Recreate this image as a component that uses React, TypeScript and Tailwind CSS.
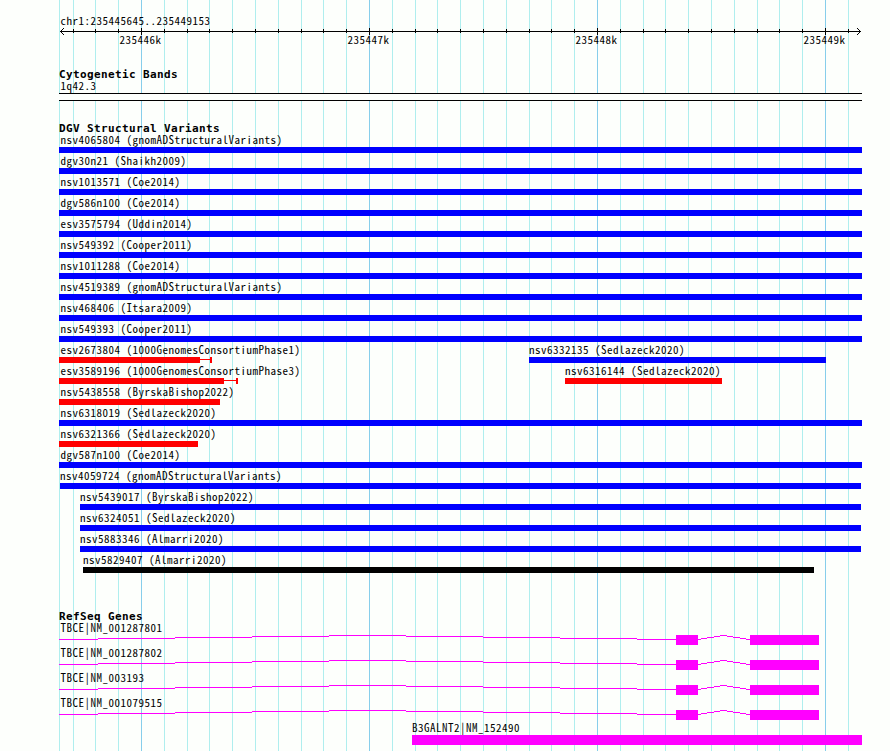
import clsx from 'clsx';

type Bar = {
    label: string;
    start: number;
    end: number;
    color?: string;
    // outer end of the uncertainty whisker
    whisker?: number;
};

// all positions are in px, measured from the left edge of the panel
const LEFT = 59;
const RIGHT = 862;

const red = 'bg-[#ff0000]';
const black = 'bg-black';

const variantRows: Bar[][] = [
    [{ label: 'nsv4065804 (gnomADStructuralVariants)', start: 59, end: 862 }],
    [{ label: 'dgv30n21 (Shaikh2009)', start: 59, end: 862 }],
    [{ label: 'nsv1013571 (Coe2014)', start: 59, end: 862 }],
    [{ label: 'dgv586n100 (Coe2014)', start: 59, end: 862 }],
    [{ label: 'esv3575794 (Uddin2014)', start: 59, end: 862 }],
    [{ label: 'nsv549392 (Cooper2011)', start: 59, end: 862 }],
    [{ label: 'nsv1011288 (Coe2014)', start: 59, end: 862 }],
    [{ label: 'nsv4519389 (gnomADStructuralVariants)', start: 59, end: 862 }],
    [{ label: 'nsv468406 (Itsara2009)', start: 59, end: 862 }],
    [{ label: 'nsv549393 (Cooper2011)', start: 59, end: 862 }],
    [
        { label: 'esv2673804 (1000GenomesConsortiumPhase1)', start: 59, end: 200, color: red, whisker: 212 },
        { label: 'nsv6332135 (Sedlazeck2020)', start: 529, end: 826 },
    ],
    [
        { label: 'esv3589196 (1000GenomesConsortiumPhase3)', start: 59, end: 224, color: red, whisker: 238 },
        { label: 'nsv6316144 (Sedlazeck2020)', start: 565, end: 722, color: red },
    ],
    [{ label: 'nsv5438558 (ByrskaBishop2022)', start: 59, end: 220, color: red }],
    [{ label: 'nsv6318019 (Sedlazeck2020)', start: 59, end: 862 }],
    [{ label: 'nsv6321366 (Sedlazeck2020)', start: 59, end: 198, color: red }],
    [{ label: 'dgv587n100 (Coe2014)', start: 59, end: 862 }],
    [{ label: 'nsv4059724 (gnomADStructuralVariants)', start: 60, end: 861 }],
    [{ label: 'nsv5439017 (ByrskaBishop2022)', start: 80, end: 861 }],
    [{ label: 'nsv6324051 (Sedlazeck2020)', start: 80, end: 861 }],
    [{ label: 'nsv5883346 (Almarri2020)', start: 80, end: 861 }],
    [{ label: 'nsv5829407 (Almarri2020)', start: 83, end: 814, color: black }],
];

const genes = ['TBCE|NM_001287801', 'TBCE|NM_001287802', 'TBCE|NM_003193', 'TBCE|NM_001079515'];

const ticks = Array.from({ length: 35 }, (_, i) => ({
    x: Math.round(141 + 22.8 * (i - 3)),
    major: i % 10 === 3,
}));

function GridLines() {
    return (
        <svg className="absolute inset-0" width="890" height="751" shapeRendering="crispEdges">
            <rect x={LEFT} y="0" width="1" height="751" fill="#afeeee" />
            {ticks.map((t) => (
                <rect key={t.x} x={t.x} y="0" width="1" height="751" fill={t.major ? '#87ceeb' : '#afeeee'} />
            ))}
        </svg>
    );
}

function Ruler() {
    return (
        <svg className="block" width="890" height="7" shapeRendering="crispEdges">
            <rect x="60" y="3" width="801" height="1" />
            {ticks.map((t) => (
                <rect key={t.x} x={t.x} y={t.major ? 0 : 1} width="1" height={t.major ? 7 : 4} />
            ))}
            <path d="M61 2h1v1h-1z M62 1h1v1h-1z M63 0h1v1h-1z M61 4h1v1h-1z M62 5h1v1h-1z M63 6h1v1h-1z" />
            <path d="M859 2h1v1h-1z M858 1h1v1h-1z M857 0h1v1h-1z M859 4h1v1h-1z M858 5h1v1h-1z M857 6h1v1h-1z" />
        </svg>
    );
}

function Label({ text, className }: { text: string; className?: string }) {
    return (
        <div
            className={clsx(
                "h-[15px] w-0 pl-[1.5px] font-['Noto_Sans_CJK_JP',monospace] text-[11px] leading-[14px] tracking-[0.5px] whitespace-pre [font-feature-settings:'hwid']",
                className,
            )}
        >
            {text}
        </div>
    );
}

function Heading({ text }: { text: string }) {
    return (
        <h2 className="ml-[59px] h-[12px] pt-[3px] font-['DejaVu_Sans_Mono',monospace] text-[11px] leading-[11px] font-bold tracking-[0.38px] whitespace-pre">
            {text}
        </h2>
    );
}

function VariantRow({ bars }: { bars: Bar[] }) {
    return (
        <div className="grid h-[21px]">
            {bars.map((b) => (
                <div key={b.label} className="col-start-1 row-start-1" style={{ marginLeft: b.start }}>
                    <Label text={b.label} className={b.start > 59 ? '-ml-[1.5px]' : ''} />
                    <div className="flex h-[6px]">
                        <div className={b.color ?? 'bg-[#0000ff]'} style={{ width: b.end - b.start }} />
                        {b.whisker && (
                            <>
                                <div className="mt-[2px] h-px bg-[#ff0000]" style={{ width: b.whisker - b.end - 2 }} />
                                <div className="w-[2px] bg-[#ff0000]" />
                            </>
                        )}
                    </div>
                </div>
            ))}
        </div>
    );
}

function GeneRow({ name }: { name: string }) {
    return (
        <div className="h-[25px]">
            <Label text={name} className="ml-[59px]" />
            <svg className="block" width="890" height="10" shapeRendering="crispEdges" fill="#ff00ff">
                <path d="M59 4h39v1h-39z M98 3h77v1h-77z M175 2h77v1h-77z M252 1h77v1h-77z M329 0h77v1h-77z M406 1h77v1h-77z M483 2h77v1h-77z M560 3h77v1h-77z M637 4h39v1h-39z" />
                <rect x="676" width="22" height="10" />
                <path d="M698 4h3v1h-3z M701 3h6v1h-6z M707 2h7v1h-7z M714 1h6v1h-6z M720 0h7v1h-7z M727 1h6v1h-6z M733 2h7v1h-7z M740 3h6v1h-6z M746 4h4v1h-4z" />
                <rect x="750" width="69" height="10" />
            </svg>
        </div>
    );
}

export default function App() {
    return (
        <div className="relative h-[751px] w-[890px] overflow-hidden bg-[#fdfffc] text-black">
            <GridLines />
            <div className="relative">
                <div className="pt-[13px]">
                    <Label text="chr1:235445645..235449153" className="ml-[59px]" />
                </div>
                <Ruler />
                <div className="flex h-[31px] pl-[118px]">
                    {['235446k', '235447k', '235448k', '235449k'].map((t) => (
                        <div key={t} className="-mt-[3px] w-[228px] shrink-0">
                            <Label text={t} />
                        </div>
                    ))}
                </div>

                <Heading text="Cytogenetic Bands" />
                <Label text="1q42.3" className="ml-[59px]" />
                <div className="ml-[59px] h-[8px] border-y border-black bg-[#fdfffc]" style={{ width: RIGHT - LEFT }} />

                <div className="pt-[19px]">
                    <Heading text="DGV Structural Variants" />
                    {variantRows.map((bars) => (
                        <VariantRow key={bars[0].label} bars={bars} />
                    ))}
                </div>

                <div className="pt-[35px]">
                    <Heading text="RefSeq Genes" />
                    {genes.map((name) => (
                        <GeneRow key={name} name={name} />
                    ))}
                    <div className="ml-[412px]">
                        <Label text="B3GALNT2|NM_152490" className="-ml-[1.5px]" />
                        <div className="h-[10px] w-[450px] bg-[#ff00ff]" />
                    </div>
                </div>
            </div>
        </div>
    );
}
